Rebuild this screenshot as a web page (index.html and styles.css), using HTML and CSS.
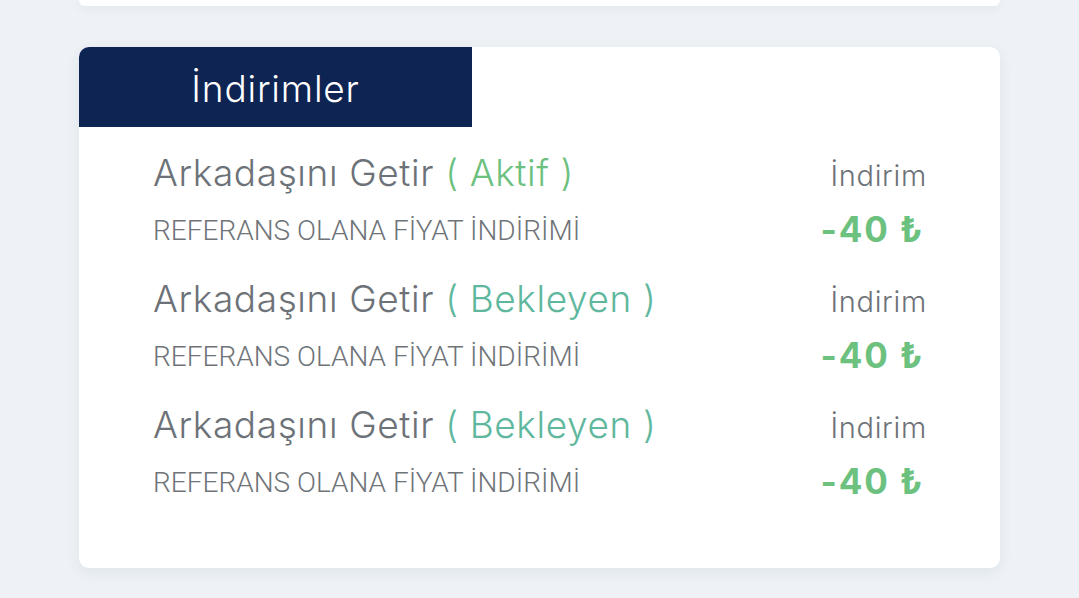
FILE: index.html
```html
<!DOCTYPE html>
<html lang="tr">
<head>
<meta charset="utf-8">
<link rel="stylesheet" href="styles.css">
</head>
<body>
<div class="page">
  <div class="top-card"></div>
  <section class="card">
    <div class="tab">İndirimler</div>
    <div class="list">
      <div class="row">
        <div class="left">
          <div class="title">Arkadaşını Getir <span class="st active">( Aktif )</span></div>
          <div class="sub">REFERANS OLANA FİYAT İNDİRİMİ</div>
        </div>
        <div class="right">
          <div class="label">İndirim</div>
          <div class="amount">-40 ₺</div>
        </div>
      </div>
      <div class="row">
        <div class="left">
          <div class="title">Arkadaşını Getir <span class="st pending">( Bekleyen )</span></div>
          <div class="sub">REFERANS OLANA FİYAT İNDİRİMİ</div>
        </div>
        <div class="right">
          <div class="label">İndirim</div>
          <div class="amount">-40 ₺</div>
        </div>
      </div>
      <div class="row">
        <div class="left">
          <div class="title">Arkadaşını Getir <span class="st pending">( Bekleyen )</span></div>
          <div class="sub">REFERANS OLANA FİYAT İNDİRİMİ</div>
        </div>
        <div class="right">
          <div class="label">İndirim</div>
          <div class="amount">-40 ₺</div>
        </div>
      </div>
    </div>
  </section>
</div>
</body>
</html>
```
FILE: styles.css
```css
* { box-sizing: border-box; }
html, body { margin: 0; padding: 0; }
body {
  background: #eef2f6;
  font-family: "Inter", "Noto Sans", sans-serif;
  width: 1079px;
  height: 598px;
  overflow: hidden;
}
.page {
  padding: 0 79px;
}
.top-card {
  height: 6px;
  background: #fff;
  border-radius: 0 0 10px 10px;
  box-shadow: 0 2px 10px rgba(40, 60, 90, 0.08);
}
.card {
  margin-top: 41px;
  height: 521px;
  background: #fff;
  border-radius: 10px;
  box-shadow: 0 4px 14px rgba(40, 60, 90, 0.08);
}
.tab {
  width: 393px;
  height: 80px;
  background: #0e2452;
  border-top-left-radius: 10px;
  color: #fff;
  font-size: 37px;
  font-weight: 300;
  letter-spacing: 0.8px;
  display: flex;
  align-items: center;
  justify-content: center;
  padding-top: 2px;
}
.list {
  padding: 20px 73px 0 74px;
  display: flex;
  flex-direction: column;
  gap: 15px;
}
.row {
  display: flex;
  justify-content: space-between;
  align-items: flex-start;
}
.title {
  font-size: 37px;
  font-weight: 300;
  color: #6d7278;
  line-height: 52px;
  letter-spacing: 0.6px;
  white-space: nowrap;
}
.st.active { color: #6cc17f; }
.st.pending { color: #5fb89e; }
.sub {
  font-family: "Roboto", sans-serif;
  font-size: 28px;
  font-weight: 300;
  color: #6f7479;
  line-height: 54px;
  margin-top: 5px;
  white-space: nowrap;
}
.right {
  display: flex;
  flex-direction: column;
  align-items: flex-end;
  padding-top: 9px;
}
.label {
  font-size: 29px;
  font-weight: 300;
  color: #6d7278;
  line-height: 40px;
  letter-spacing: 0.7px;
}
.amount {
  font-size: 35px;
  font-weight: 700;
  color: #6cc17f;
  line-height: 54px;
  margin-top: 6px;
  padding-right: 3px;
  letter-spacing: 1.8px;
  white-space: nowrap;
}
```
